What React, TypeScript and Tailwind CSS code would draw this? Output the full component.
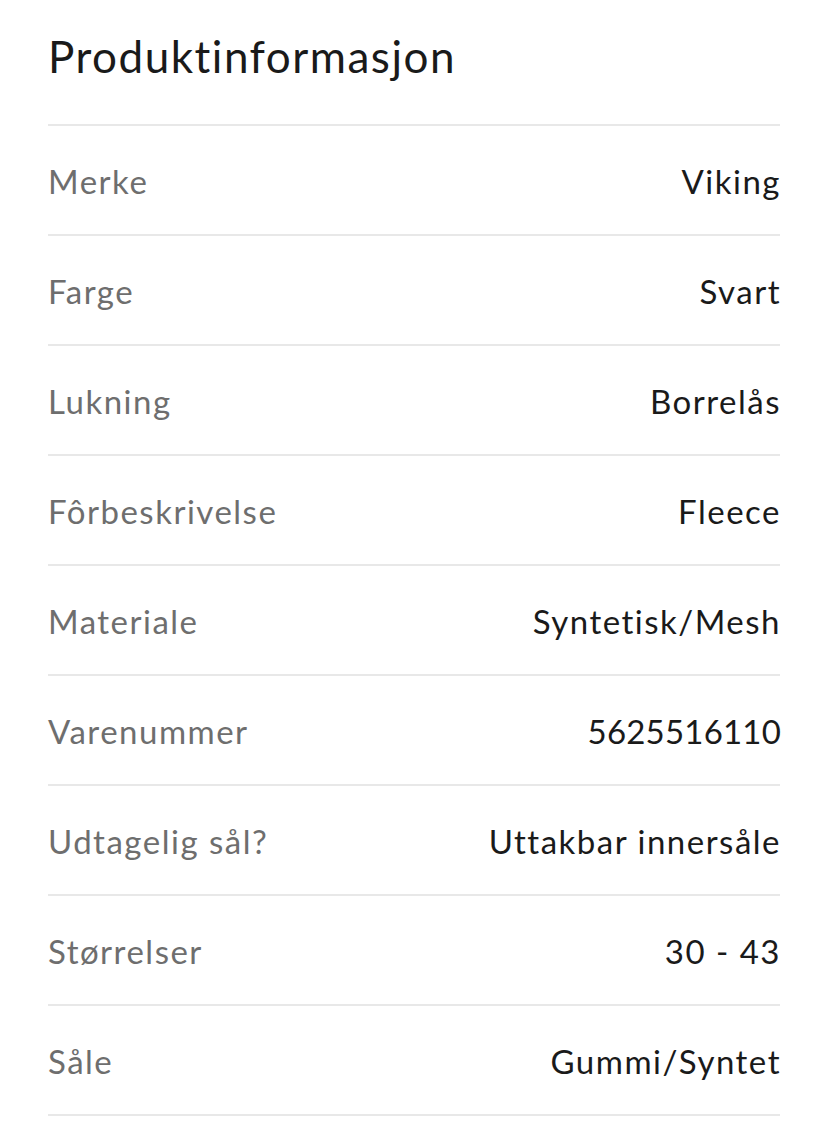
import React from "react";

const rows: [string, string, string?][] = [
  ["Merke", "Viking"],
  ["Farge", "Svart"],
  ["Lukning", "Borrelås"],
  ["Fôrbeskrivelse", "Fleece"],
  ["Materiale", "Syntetisk/Mesh"],
  ["Varenummer", "5625516110", "tracking-[0.2px]"],
  ["Udtagelig sål?", "Uttakbar innersåle"],
  ["Størrelser", "30 - 43"],
  ["Såle", "Gummi/Syntet"],
];

export default function App() {
  return (
    <div className="w-[828px] h-[1142px] bg-white overflow-hidden font-['Lato',sans-serif]">
      <div className="pl-12 pr-12">
        <h1 className="h-[124px] pt-[24px] text-[44px] leading-[64px] tracking-[1.5px] text-[#1a1a1a] font-normal">
          Produktinformasjon
        </h1>
        {rows.map(([k, v, extra]) => (
          <div
            key={k}
            className="h-[110px] border-t-2 border-[#e8e8e8] flex items-center justify-between pt-1 text-[33px] tracking-[1.5px]"
          >
            <span className="text-[#6e6e6e]">{k}</span>
            <span className={"text-[#1a1a1a] mr-[-1px] " + (extra ?? "")}>{v}</span>
          </div>
        ))}
        <div className="border-t-2 border-[#e8e8e8]" />
      </div>
    </div>
  );
}
